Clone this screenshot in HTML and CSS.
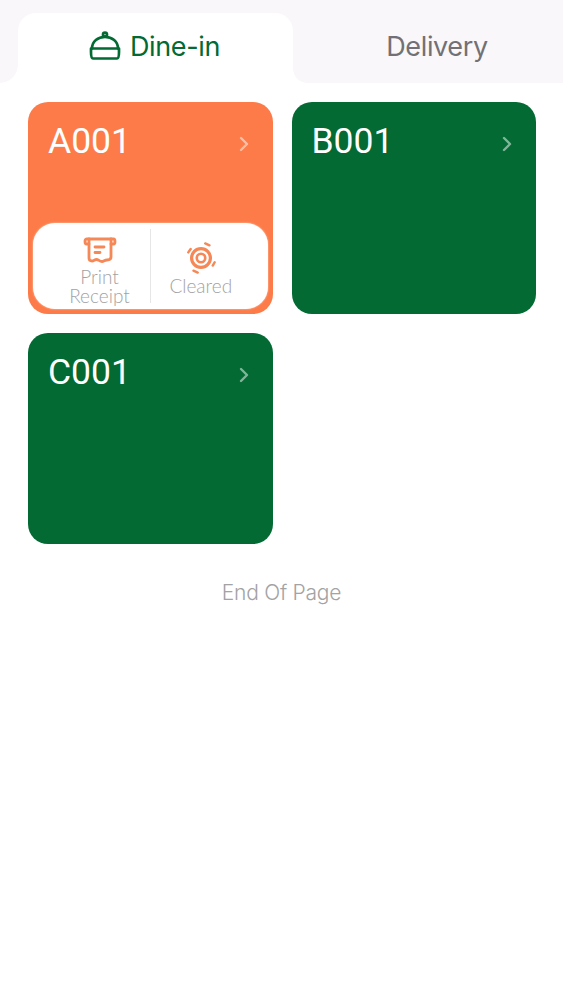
FILE: index.html
```html
<!DOCTYPE html>
<html lang="en">
<head>
  <meta charset="UTF-8">
  <meta name="viewport" content="width=device-width, initial-scale=1.0">
  <title>Tables</title>
  <link rel="stylesheet" href="styles.css">
</head>
<body>
  <nav class="tabs">
    <div class="tab active">
      <svg class="tab-icon" viewBox="0 0 32 30" fill="none" stroke="currentColor" stroke-width="2.700" stroke-linejoin="round" stroke-linecap="round">
        <circle cx="16" cy="3.600" r="2"/>
        <path d="M3 17.500C3 10.500 9 5.800 16 5.800S29 10.500 29 17.500"/>
        <path d="M2 17.500H30V21C30 24 29.500 27.500 28 27.500H4C2.500 27.500 2 24 2 21Z"/>
      </svg>
      <span>Dine-in</span>
    </div>
    <div class="tab">Delivery</div>
  </nav>

  <main class="grid">
    <section class="card orange">
      <div class="card-head">
        <span class="card-name">A001</span>
        <svg class="chevron" viewBox="0 0 10 16" fill="none" stroke="currentColor" stroke-width="2.400" stroke-linecap="round" stroke-linejoin="round"><path d="M2 2L8 8L2 14"/></svg>
      </div>
      <div class="actions">
        <div class="action">
          <svg class="action-icon" viewBox="0 0 34 26" fill="none" stroke="currentColor" stroke-width="2.800" stroke-linecap="round" stroke-linejoin="round">
            <path d="M6 7H3.500C1.500 7 1.500 2 3.500 2H30.500C32.500 2 32.500 7 30.500 7H28"/>
            <path d="M6 2V21C6 23 7 24 9 24C11 24 11.500 22.500 13.500 22.500C15.500 22.500 16.500 24.500 19 24.500C21 24.500 21.500 23 24 23C27 23 28 22 28 20V2"/>
            <path d="M12 10H21M12 15.500H17"/>
          </svg>
          <span>Print<br>Receipt</span>
        </div>
        <div class="action">
          <svg class="action-icon round" viewBox="0 0 34 34" fill="none" stroke="currentColor" stroke-linecap="round">
            <circle cx="17" cy="17" r="10" stroke-width="3.400"/>
            <circle cx="17" cy="17" r="4.500" stroke-width="2.800"/>
            <path d="M3.500 11L6 7.500M21.500 1.500L26 3.500M31.500 21.500L29.500 25M9 30.500L13.500 32.500" stroke-width="2.600"/>
          </svg>
          <span>Cleared</span>
        </div>
      </div>
    </section>

    <section class="card green">
      <div class="card-head">
        <span class="card-name">B001</span>
        <svg class="chevron" viewBox="0 0 10 16" fill="none" stroke="currentColor" stroke-width="2.400" stroke-linecap="round" stroke-linejoin="round"><path d="M2 2L8 8L2 14"/></svg>
      </div>
    </section>

    <section class="card green">
      <div class="card-head">
        <span class="card-name">C001</span>
        <svg class="chevron" viewBox="0 0 10 16" fill="none" stroke="currentColor" stroke-width="2.400" stroke-linecap="round" stroke-linejoin="round"><path d="M2 2L8 8L2 14"/></svg>
      </div>
    </section>
  </main>

  <p class="end-note">End Of Page</p>
</body>
</html>
```

FILE: styles.css
```css
:root {
  --green: #026a32;
  --orange: #fd7b48;
  --tab-bg: #f9f7fa;
  --radius: 20px;
}

body {
  margin: 0;
  background-color: #fff;
  font-family: 'Roboto', 'Liberation Sans', sans-serif;
}

.tabs {
  display: flex;
  align-items: flex-end;
  height: 83px;
  padding-left: 18px;
  background-color: var(--tab-bg);
}

.tab {
  display: flex;
  flex: 1;
  align-items: center;
  justify-content: center;
  height: 70px;
  padding-bottom: 3px;
  padding-left: 18px;
  box-sizing: border-box;
  font-family: 'Inter', sans-serif;
  font-size: 27px;
  letter-spacing: -0.35px;
  color: #727075;
}

.tab.active {
  position: relative;
  flex: 0 0 275px;
  gap: 9px;
  padding-right: 2px;
  padding-left: 0;
  background-color: #fff;
  border-radius: 18px 18px 0 0;
  color: var(--green);
}

.tab.active::before,
.tab.active::after {
  content: '';
  position: absolute;
  bottom: 0;
  width: 18px;
  height: 18px;
}

.tab.active::before {
  left: -18px;
  background: radial-gradient(circle at 0 0, transparent 17.500px, #fff 18px);
}

.tab.active::after {
  right: -14px;
  width: 14px;
  height: 14px;
  background: radial-gradient(circle at 100% 0, transparent 13.500px, #fff 14px);
}

.tab-icon {
  width: 32px;
  height: 30px;
  margin-bottom: 2px;
}

.grid {
  display: grid;
  grid-template-columns: 244.5px 244.5px;
  grid-auto-rows: 211.5px;
  gap: 19px;
  padding: 19px 27px 0 28px;
}

.card {
  display: flex;
  flex-direction: column;
  justify-content: space-between;
  box-sizing: border-box;
  border-radius: var(--radius);
  color: #fff;
}

.card.green {
  background-color: var(--green);
}

.card.orange {
  background-color: var(--orange);
}

.card-head {
  display: flex;
  align-items: center;
  justify-content: space-between;
  padding: 18px 24px 0 20px;
}

.card-name {
  font-size: 35.5px;
  line-height: 42px;
}

.chevron {
  width: 10px;
  height: 16px;
  margin-top: 6px;
  color: rgba(255, 255, 255, 0.5);
}

.actions {
  display: flex;
  height: 86px;
  margin: 0 5px 5px;
  background-color: #fff;
  border-radius: 22px;
  box-shadow: 0 0 2px rgba(255, 255, 255, 0.7);
}

.action {
  display: flex;
  flex: 1;
  flex-direction: column;
  align-items: center;
  justify-content: flex-end;
  box-sizing: border-box;
  margin: 6px 0;
  font-family: 'Lato', sans-serif;
  font-size: 19px;
  font-weight: 300;
  line-height: 19px;
  text-align: center;
  color: #a3a2a3;
}

.action:first-child {
  flex: 0 0 118px;
  padding-left: 16px;
  padding-bottom: 0;
  border-right: 1px solid #e6e6e6;
}

.action:first-child span {
  position: relative;
  top: 2px;
}

.action:last-child {
  padding-right: 17px;
  padding-bottom: 8px;
}

.action-icon {
  width: 34px;
  height: 26px;
  margin-bottom: 4px;
  position: relative;
  top: 2px;
  color: #f58856;
}

.action-icon.round {
  height: 32px;
  margin-bottom: 2px;
  top: 0;
}

.end-note {
  margin: 36px 0 0;
  font-family: 'Inter', sans-serif;
  font-size: 21px;
  font-weight: 300;
  line-height: 26px;
  letter-spacing: -0.25px;
  text-align: center;
  color: #a3a2a4;
}
```
